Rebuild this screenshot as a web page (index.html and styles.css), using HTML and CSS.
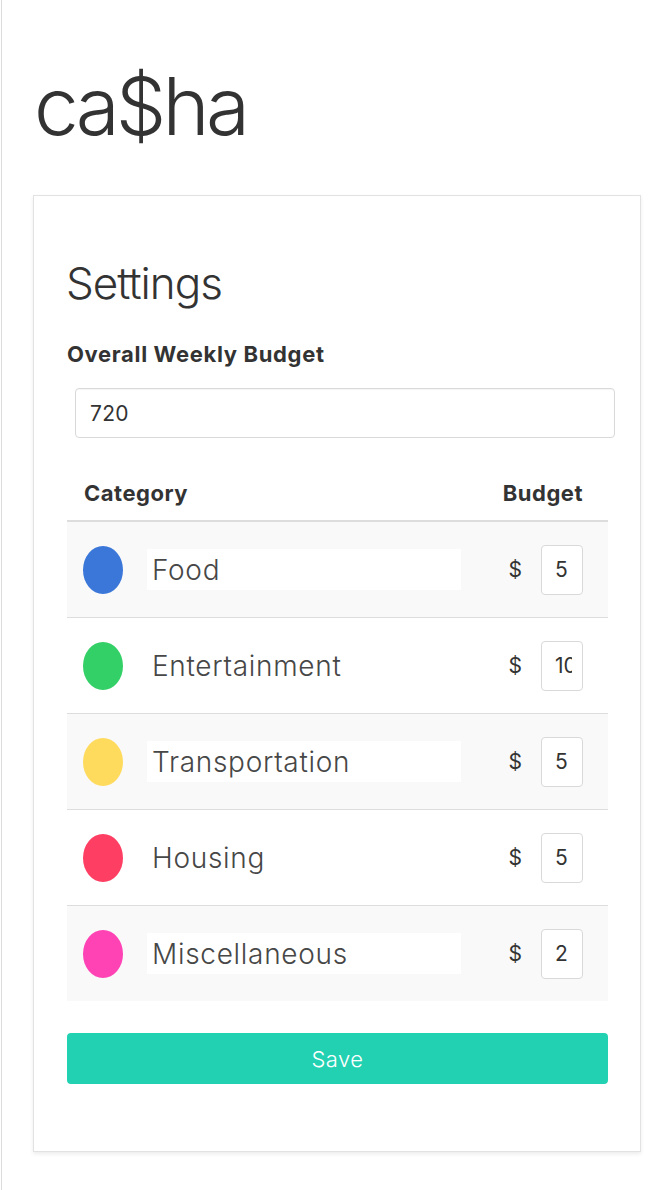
FILE: index.html
```html
<!DOCTYPE html>
<html>
<head>
<meta charset="utf-8">
<link rel="stylesheet" href="styles.css">
</head>
<body>
<div class="page">
  <h1 class="logo">ca$ha</h1>
  <div class="card">
    <h2 class="title">Settings</h2>
    <div class="label">Overall Weekly Budget</div>
    <input class="total" type="text" value="720">
    <table class="cats">
      <thead>
        <tr><th class="th-cat">Category</th><th class="th-bud">Budget</th></tr>
      </thead>
      <tbody>
        <tr>
          <td class="c-cat"><div class="cat"><span class="dot blue"></span><input class="name" type="text" value="Food"></div></td>
          <td class="c-bud"><div class="bud"><span class="cur">$</span><input class="amt" type="text" value="5"></div></td>
        </tr>
        <tr>
          <td class="c-cat"><div class="cat"><span class="dot green"></span><input class="name" type="text" value="Entertainment"></div></td>
          <td class="c-bud"><div class="bud"><span class="cur">$</span><input class="amt" type="text" value="100"></div></td>
        </tr>
        <tr>
          <td class="c-cat"><div class="cat"><span class="dot yellow"></span><input class="name" type="text" value="Transportation"></div></td>
          <td class="c-bud"><div class="bud"><span class="cur">$</span><input class="amt" type="text" value="5"></div></td>
        </tr>
        <tr>
          <td class="c-cat"><div class="cat"><span class="dot red"></span><input class="name" type="text" value="Housing"></div></td>
          <td class="c-bud"><div class="bud"><span class="cur">$</span><input class="amt" type="text" value="5"></div></td>
        </tr>
        <tr>
          <td class="c-cat"><div class="cat"><span class="dot pink"></span><input class="name" type="text" value="Miscellaneous"></div></td>
          <td class="c-bud"><div class="bud"><span class="cur">$</span><input class="amt" type="text" value="2"></div></td>
        </tr>
      </tbody>
    </table>
    <button class="save" type="button">Save</button>
  </div>
</div>
</body>
</html>
```
FILE: styles.css
```css
html, body {
  margin: 0;
  padding: 0;
  background: #fff;
}
body {
  font-family: Inter, Roboto, Arial, sans-serif;
  color: #333;
}
.page {
  margin-left: 1px;
  border-left: 1px solid #dcdcdc;
  min-height: 1190px;
  padding: 58px 0 0 31px;
  box-sizing: border-box;
}
.logo {
  margin: 0;
  font-size: 80px;
  font-weight: 300;
  line-height: 96px;
  letter-spacing: -3.8px;
  color: #333;
  padding-left: 1px;
}
.card {
  margin-top: 41px;
  width: 608px;
  box-sizing: border-box;
  border: 1px solid #e2e2e2;
  box-shadow: 0 2px 4px rgba(0, 0, 0, 0.08);
  padding: 61px 33px 67px 33px;
  background: #fff;
}
.title {
  margin: 0;
  font-size: 44px;
  font-weight: 300;
  line-height: 53px;
  letter-spacing: -1px;
  margin-left: -1px;
}
.label {
  margin-top: 31px;
  font-size: 22px;
  font-weight: 700;
  line-height: 26px;
  letter-spacing: 0.65px;
}
.total {
  display: block;
  margin: 21px 0 0 8px;
  width: 540px;
  height: 50px;
  box-sizing: border-box;
  border: 1px solid #d9d9d9;
  border-radius: 4px;
  padding: 0 14px;
  font-family: inherit;
  font-size: 21px;
  letter-spacing: 0.3px;
  color: #333;
  background: #fff;
  box-shadow: inset 0 1px 1px rgba(0, 0, 0, 0.04);
}
.cats {
  margin-top: 29px;
  width: 541px;
  border-collapse: collapse;
}
.cats th {
  font-size: 22px;
  font-weight: 700;
  line-height: 26px;
  letter-spacing: 0.5px;
  padding: 13px 0 14px 0;
  border-bottom: 2px solid #ddd;
}
.th-cat {
  text-align: left;
  padding-left: 17px !important;
}
.th-bud {
  text-align: right;
  padding-right: 25px !important;
}
.cats td {
  border-top: 1px solid #ddd;
  height: 95px;
  padding: 0;
  vertical-align: middle;
}
.cats tbody tr:nth-child(odd) td {
  background: #f9f9f9;
}
.cat {
  display: flex;
  align-items: center;
  gap: 24px;
  padding-left: 16px;
}
.dot {
  display: block;
  width: 40px;
  height: 48px;
  border-radius: 50%;
  flex: none;
}
.blue { background: #3a77d9; }
.green { background: #33cf67; }
.yellow { background: #ffdb5d; }
.red { background: #ff3e63; }
.pink { background: #ff43b4; }
.name {
  width: 314px;
  height: 41px;
  box-sizing: border-box;
  border: none;
  background: #fff;
  padding: 0 5px;
  font-family: inherit;
  font-size: 28px;
  font-weight: 300;
  letter-spacing: 0.7px;
  color: #474747;
  outline: none;
}
.bud {
  display: flex;
  align-items: center;
  justify-content: flex-end;
  gap: 19px;
  padding-right: 25px;
}
.cur {
  font-size: 21px;
  color: #333;
}
.amt {
  width: 42px;
  height: 50px;
  box-sizing: border-box;
  border: 1px solid #d9d9d9;
  border-radius: 4px;
  padding: 0 10px 0 13px;
  font-family: inherit;
  font-size: 21px;
  color: #333;
  background: #fff;
}
.save {
  display: block;
  margin-top: 32px;
  width: 541px;
  height: 51px;
  border: none;
  border-radius: 4px;
  background: #22d1b2;
  color: #fff;
  font-family: inherit;
  font-size: 22px;
  font-weight: 300;
  letter-spacing: 0.5px;
}
```
